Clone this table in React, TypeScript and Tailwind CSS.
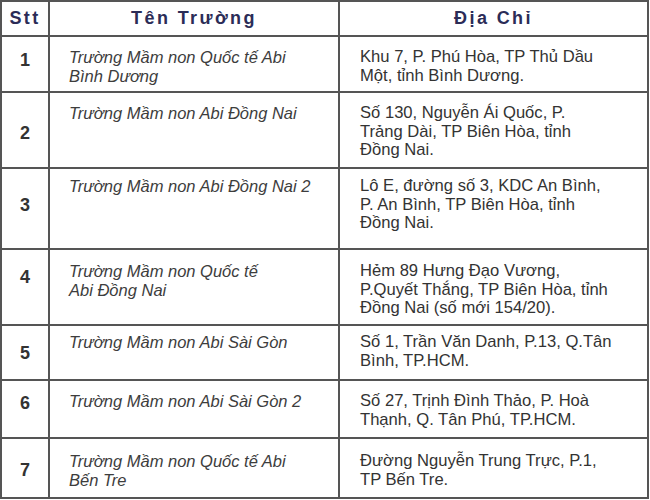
const ROWS = [
  {
    stt: "1",
    name: ["Trường Mầm non Quốc tế Abi", "Bình Dương"],
    addr: ["Khu 7, P. Phú Hòa, TP Thủ Dầu", "Một, tỉnh Bình Dương."],
    digitPad: "pt-[14px]",
    textPad: "pt-[11px]",
  },
  {
    stt: "2",
    name: ["Trường Mầm non Abi Đồng Nai"],
    addr: ["Số 130, Nguyễn Ái Quốc, P.", "Trảng Dài, TP Biên Hòa, tỉnh", "Đồng Nai."],
    digitPad: "pt-[31px]",
    textPad: "pt-[11px]",
  },
  {
    stt: "3",
    name: ["Trường Mầm non Abi Đồng Nai 2"],
    addr: ["Lô E, đường số 3, KDC An Bình,", "P. An Bình, TP Biên Hòa, tỉnh", "Đồng Nai."],
    digitPad: "pt-[27px]",
    textPad: "pt-[8px]",
  },
  {
    stt: "4",
    name: ["Trường Mầm non Quốc tế", "Abi Đồng Nai"],
    addr: ["Hẻm 89 Hưng Đạo Vương,", "P.Quyết Thắng, TP Biên Hòa, tỉnh", "Đồng Nai (số mới 154/20)."],
    digitPad: "pt-[18px]",
    textPad: "pt-[12px]",
  },
  {
    stt: "5",
    name: ["Trường Mầm non Abi Sài Gòn"],
    addr: ["Số 1, Trần Văn Danh, P.13, Q.Tân", "Bình, TP.HCM."],
    digitPad: "pt-[18px]",
    textPad: "pt-[7px]",
  },
  {
    stt: "6",
    name: ["Trường Mầm non Abi Sài Gòn 2"],
    addr: ["Số 27, Trịnh Đình Thảo, P. Hoà", "Thạnh, Q. Tân Phú, TP.HCM."],
    digitPad: "pt-[13px]",
    textPad: "pt-[11px]",
  },
  {
    stt: "7",
    name: ["Trường Mầm non Quốc tế Abi", "Bến Tre"],
    addr: ["Đường Nguyễn Trung Trực, P.1,", "TP Bến Tre."],
    digitPad: "pt-[22px]",
    textPad: "pt-[13px]",
  },
];

const cell = "border-r-2 border-b-2 border-[#555555]";
const head = `${cell} flex items-center justify-center text-[18px] font-bold tracking-[2.4px] text-[#2b2c57]`;

function Lines({ lines }: { lines: string[] }) {
  return (
    <>
      {lines.map((line, i) => (
        <div key={i} className="whitespace-nowrap">
          {line}
        </div>
      ))}
    </>
  );
}

export default function App() {
  return (
    <div className="w-[650px] h-[500px] bg-white font-['Liberation_Sans',Arial,sans-serif]">
      <div className="grid grid-cols-[48px_290px_309px] grid-rows-[35px_56px_76px_81px_76px_55px_58px_60px] w-[649px] border-l-2 border-t-2 border-[#555555]">
        <div className={head}>Stt</div>
        <div className={head}>Tên Trường</div>
        <div className={head}>Địa Chỉ</div>

        {ROWS.map((r) => (
          <div key={r.stt} className="contents">
            <div className={`${cell} ${r.digitPad} text-center text-[18px] leading-[18px] font-bold text-[#333333]`}>
              {r.stt}
            </div>
            <div className={`${cell} ${r.textPad} pl-[19px] text-[16.5px] leading-[18.7px] italic text-[#3d3d3d]`}>
              <Lines lines={r.name} />
            </div>
            <div className={`${cell} ${r.textPad} pl-[20px] text-[16.6px] leading-[18.7px] text-[#333333]`}>
              <Lines lines={r.addr} />
            </div>
          </div>
        ))}
      </div>
    </div>
  );
}
